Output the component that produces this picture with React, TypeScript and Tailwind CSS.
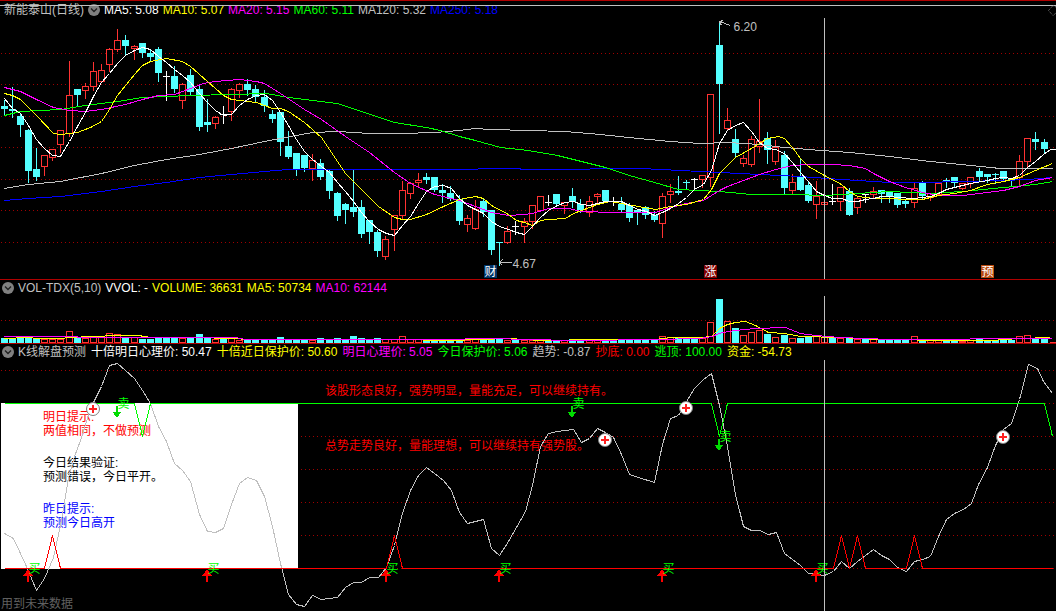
import React, { useState } from 'react';
import clsx from 'clsx';

type Point = [number, number];
// r = rising (hollow), c = falling (solid), w = unchanged
type Candle = ['r' | 'c' | 'w', number, number, number, number];

// kind, high, body top, body bottom, low
const candles: Candle[] = [
  ['c', 99, 106, 109, 115], ['c', 86, 109, 111, 117], ['c', 112, 116, 125, 136], ['c', 128, 130, 171, 182],
  ['c', 147, 169, 177, 180], ['r', 155, 155, 166, 175], ['r', 148, 149, 157, 160], ['r', 130, 130, 144, 152],
  ['r', 60, 95, 133, 136], ['c', 89, 89, 95, 105], ['r', 82, 86, 90, 98], ['r', 61, 71, 86, 90],
  ['r', 63, 70, 81, 82], ['r', 47, 49, 64, 71], ['r', 28, 40, 49, 51], ['c', 34, 40, 46, 55],
  ['r', 44, 46, 48, 59], ['c', 43, 43, 53, 57], ['c', 49, 53, 57, 60], ['c', 46, 49, 73, 81],
  ['w', 70, 76, 76, 100], ['c', 65, 76, 89, 92], ['r', 82, 84, 100, 108], ['c', 68, 75, 92, 95],
  ['c', 85, 89, 127, 130], ['c', 98, 122, 125, 131], ['r', 115, 117, 123, 128], ['w', 105, 114, 114, 123],
  ['r', 87, 89, 111, 120], ['r', 82, 84, 90, 97], ['c', 78, 84, 90, 95], ['c', 84, 89, 97, 101],
  ['c', 89, 97, 106, 111], ['c', 109, 114, 119, 122], ['c', 111, 112, 142, 155], ['c', 130, 146, 157, 158],
  ['c', 153, 153, 169, 175], ['c', 155, 155, 168, 171], ['r', 153, 160, 168, 180], ['c', 158, 163, 177, 179],
  ['c', 169, 171, 191, 198], ['c', 191, 193, 216, 220], ['c', 202, 204, 210, 223], ['c', 169, 207, 212, 216],
  ['c', 199, 207, 234, 237], ['c', 220, 220, 232, 243], ['c', 229, 232, 251, 256], ['r', 235, 239, 256, 259],
  ['r', 215, 215, 229, 250], ['r', 180, 190, 215, 218], ['r', 181, 183, 193, 198], ['r', 172, 180, 182, 187],
  ['c', 172, 177, 180, 183], ['c', 177, 177, 190, 191], ['c', 183, 190, 193, 202], ['c', 185, 193, 199, 200],
  ['c', 194, 199, 221, 224], ['r', 214, 218, 224, 231], ['r', 199, 209, 228, 229], ['c', 198, 201, 212, 216],
  ['c', 210, 210, 250, 254], ['c', 242, 242, 243, 265], ['r', 225, 231, 242, 243], ['w', 220, 226, 226, 234],
  ['r', 217, 221, 226, 242], ['r', 205, 205, 221, 228], ['r', 196, 196, 210, 211], ['w', 194, 202, 202, 205],
  ['c', 194, 194, 204, 206], ['r', 202, 202, 205, 213], ['c', 187, 196, 202, 207], ['c', 198, 204, 210, 212],
  ['r', 195, 201, 212, 216], ['r', 192, 194, 196, 202], ['c', 190, 190, 201, 202], ['w', 196, 201, 201, 205],
  ['c', 196, 204, 210, 212], ['c', 202, 205, 218, 221], ['c', 209, 210, 213, 224], ['c', 205, 207, 215, 218],
  ['c', 210, 215, 220, 221], ['r', 192, 196, 223, 237], ['r', 183, 191, 194, 202], ['c', 175, 191, 193, 194],
  ['c', 179, 182, 183, 189], ['w', 177, 179, 179, 188], ['r', 175, 175, 179, 187], ['r', 94, 94, 177, 186],
  ['c', 21, 45, 84, 133], ['r', 107, 120, 128, 130], ['c', 128, 139, 153, 157], ['r', 154, 158, 163, 166],
  ['r', 135, 139, 164, 166], ['r', 98, 141, 146, 152], ['c', 131, 138, 150, 163], ['r', 139, 147, 161, 164],
  ['c', 150, 155, 188, 194], ['r', 173, 182, 190, 193], ['c', 157, 177, 190, 190], ['c', 180, 185, 201, 202],
  ['r', 180, 196, 204, 218], ['r', 190, 202, 204, 213], ['w', 183, 201, 201, 204], ['r', 187, 187, 201, 210],
  ['c', 187, 191, 215, 215], ['r', 195, 198, 207, 213], ['w', 193, 194, 194, 202], ['r', 186, 191, 194, 197],
  ['c', 190, 190, 194, 202], ['c', 191, 191, 196, 202], ['c', 193, 193, 205, 207], ['c', 198, 201, 204, 207],
  ['r', 181, 188, 202, 207], ['c', 180, 182, 196, 198], ['r', 192, 193, 197, 200], ['r', 183, 183, 194, 195],
  ['c', 177, 180, 181, 187], ['c', 177, 177, 183, 187], ['r', 183, 183, 188, 189], ['r', 176, 177, 183, 187],
  ['c', 167, 171, 177, 180], ['c', 174, 174, 177, 182], ['c', 172, 174, 175, 183], ['c', 171, 171, 179, 180],
  ['c', 177, 179, 181, 185], ['r', 154, 161, 177, 184], ['r', 138, 138, 161, 166], ['c', 131, 139, 142, 149],
  ['c', 138, 142, 149, 153],
];

// Top edge of every volume bar, one for each candle
const volumeTops = [
  338, 338, 338, 337, 338, 339, 339, 339, 331, 338, 338, 337, 337, 333, 334, 337, 337, 339, 339, 337,
  337, 338, 338, 338, 334, 338, 339, 339, 338, 340, 339, 339, 339, 339, 337, 340, 340, 340, 340, 338,
  340, 338, 339, 336, 338, 339, 338, 339, 339, 336, 339, 339, 340, 340, 340, 339, 340, 340, 338, 340,
  338, 338, 340, 340, 340, 340, 340, 340, 340, 340, 339, 339, 340, 339, 340, 340, 339, 340, 340, 339,
  340, 336, 337, 337, 338, 339, 338, 322, 299, 321, 328, 335, 332, 330, 334, 337, 335, 338, 338, 337,
  336, 337, 337, 338, 337, 339, 339, 339, 340, 340, 340, 340, 336, 340, 340, 340, 340, 340, 341, 340,
  338, 340, 340, 340, 340, 336, 335, 339, 339,
];

const ma5: Point[] = [
  [4, 98], [12, 108], [20, 113], [28, 125], [36, 139], [44, 148], [52, 155], [60, 156], [69, 141], [77, 126],
  [85, 112], [93, 96], [101, 82], [109, 73], [117, 63], [125, 55], [134, 50], [142, 47], [150, 49], [158, 56],
  [166, 62], [174, 69], [182, 75], [190, 82], [199, 93], [207, 102], [215, 110], [223, 115], [231, 114],
  [239, 105], [247, 99], [256, 95], [264, 94], [272, 100], [280, 112], [288, 125], [296, 139], [304, 151],
  [312, 159], [321, 166], [329, 172], [337, 182], [345, 191], [353, 201], [361, 212], [369, 221], [378, 229],
  [386, 233], [394, 235], [402, 225], [410, 216], [418, 203], [426, 191], [434, 186], [443, 185], [451, 188],
  [459, 198], [467, 205], [475, 209], [483, 213], [491, 221], [499, 226], [508, 229], [516, 232], [524, 234],
  [532, 226], [540, 217], [548, 210], [557, 205], [565, 202], [573, 201], [581, 204], [589, 205], [597, 203],
  [605, 201], [621, 201], [629, 205], [638, 209], [646, 211], [654, 215], [662, 212], [670, 208], [678, 203],
  [686, 197], [694, 189], [703, 184], [711, 170], [719, 143], [727, 130], [735, 125], [743, 122], [751, 131],
  [759, 142], [767, 148], [775, 149], [784, 153], [792, 162], [800, 172], [808, 181], [816, 191], [824, 195],
  [832, 198], [841, 198], [849, 201], [857, 201], [865, 199], [873, 198], [881, 196], [889, 196], [897, 197],
  [913, 198], [922, 197], [930, 196], [938, 193], [946, 189], [954, 187], [970, 183], [987, 180], [995, 178],
  [1003, 177], [1011, 178], [1019, 175], [1027, 167], [1035, 161], [1043, 154], [1050, 149], [1055, 149],
];

const ma10: Point[] = [
  [4, 93], [12, 95], [20, 99], [36, 115], [53, 133], [60, 134], [77, 132], [90, 127], [101, 121], [109, 109],
  [117, 95], [134, 74], [142, 65], [150, 61], [166, 58], [182, 61], [190, 66], [207, 81], [223, 95], [231, 99],
  [256, 102], [264, 105], [272, 108], [280, 108], [288, 111], [304, 122], [321, 137], [329, 149], [345, 173],
  [361, 189], [378, 206], [394, 217], [402, 219], [410, 219], [426, 214], [443, 206], [459, 199], [475, 196],
  [483, 198], [491, 205], [508, 214], [516, 220], [524, 222], [532, 225], [540, 220], [548, 219], [565, 218],
  [573, 213], [589, 207], [597, 204], [609, 201], [621, 203], [638, 206], [655, 209], [670, 206], [686, 204],
  [703, 199], [711, 189], [719, 173], [735, 157], [751, 148], [767, 138], [778, 136], [784, 138], [792, 147],
  [800, 158], [808, 166], [824, 175], [841, 184], [849, 191], [857, 196], [873, 198], [922, 199], [938, 195],
  [954, 193], [970, 190], [987, 184], [1003, 181], [1019, 177], [1035, 170], [1052, 163],
];

const ma20: Point[] = [
  [4, 87], [20, 91], [36, 99], [53, 107], [69, 110], [85, 111], [101, 109], [125, 104], [142, 99], [158, 95],
  [174, 94], [190, 88], [203, 83], [215, 81], [239, 79], [256, 81], [264, 83], [280, 93], [304, 109], [321, 119],
  [345, 136], [369, 152], [394, 172], [410, 183], [434, 194], [459, 200], [475, 206], [491, 212], [508, 215],
  [524, 214], [532, 213], [548, 208], [568, 208], [581, 211], [613, 212], [655, 212], [670, 207], [686, 203],
  [703, 200], [719, 190], [727, 186], [743, 180], [759, 174], [775, 169], [792, 165], [808, 164], [832, 164],
  [849, 165], [865, 168], [873, 173], [889, 181], [905, 187], [922, 192], [938, 195], [962, 195], [987, 192],
  [1003, 190], [1019, 186], [1035, 180], [1052, 177],
];

const ma60: Point[] = [
  [4, 115], [20, 111], [60, 109], [85, 105], [117, 101], [142, 97], [190, 95], [231, 94], [266, 93], [288, 97],
  [312, 100], [337, 103], [361, 111], [394, 122], [426, 127], [440, 130], [459, 136], [475, 140], [500, 147],
  [528, 150], [557, 155], [581, 161], [605, 167], [629, 175], [654, 182], [678, 189], [719, 191], [751, 194],
  [792, 194], [824, 195], [857, 193], [889, 191], [930, 193], [962, 191], [1003, 187], [1035, 184], [1052, 181],
];

const ma120: Point[] = [
  [4, 188], [28, 184], [60, 181], [101, 173], [134, 165], [166, 159], [199, 154], [231, 148], [264, 141],
  [290, 136], [312, 132], [337, 131], [369, 133], [402, 133], [434, 132], [459, 130], [475, 128], [490, 129],
  [528, 130], [565, 131], [600, 134], [638, 138], [670, 141], [700, 143], [727, 142], [759, 144], [784, 147],
  [808, 149], [849, 152], [889, 156], [930, 161], [970, 165], [1000, 168], [1052, 168],
];

const ma250: Point[] = [
  [4, 200], [28, 198], [60, 196], [101, 191], [134, 186], [166, 182], [199, 177], [231, 174], [264, 171],
  [288, 169], [455, 169], [500, 168], [540, 169], [640, 168], [680, 170], [719, 172], [759, 174], [800, 176],
  [841, 179], [889, 182], [922, 182], [962, 181], [1003, 180], [1027, 179], [1052, 177],
];

const volMa5: Point[] = [
  [4, 338], [28, 337], [36, 338], [60, 338], [69, 337], [93, 336], [117, 335], [138, 335], [150, 337], [190, 337],
  [235, 338], [245, 339], [394, 339], [450, 340], [508, 338], [540, 340], [600, 339], [655, 339], [670, 337],
  [700, 337], [711, 336], [719, 328], [727, 324], [735, 322], [745, 321], [755, 325], [768, 332], [784, 333],
  [800, 336], [840, 337], [857, 338], [880, 339], [950, 340], [990, 340], [1019, 338], [1050, 337],
];

const volMa10: Point[] = [
  [4, 336], [150, 337], [235, 337], [245, 339], [430, 339], [500, 338], [520, 339], [580, 340], [655, 339],
  [700, 338], [711, 336], [722, 332], [735, 330], [755, 328], [785, 327], [800, 333], [815, 335], [840, 337],
  [890, 339], [1052, 338],
];

const trend: Point[] = [
  [4, 533], [13, 538], [20, 553], [26, 566], [36, 590], [44, 578], [53, 557], [60, 525], [65, 496], [68, 477],
  [74, 456], [80, 440], [88, 415], [93, 402], [101, 386], [109, 365], [117, 363], [125, 370], [134, 378],
  [142, 390], [150, 403], [158, 426], [166, 441], [174, 463], [182, 470], [190, 481], [199, 514], [207, 531],
  [215, 532], [223, 528], [231, 504], [239, 483], [247, 477], [256, 480], [264, 496], [272, 526], [280, 563],
  [288, 594], [296, 604], [304, 606], [312, 595], [321, 599], [337, 597], [345, 587], [353, 582], [361, 582],
  [369, 577], [378, 577], [386, 567], [394, 545], [402, 513], [410, 490], [418, 475], [426, 467], [434, 473],
  [443, 480], [451, 490], [459, 512], [467, 523], [483, 519], [491, 548], [499, 555], [508, 541], [525, 511],
  [532, 485], [540, 446], [548, 433], [557, 431], [573, 429], [581, 442], [589, 438], [597, 428], [605, 432],
  [613, 437], [621, 454], [629, 474], [638, 477], [654, 482], [662, 444], [670, 418], [678, 415], [686, 401],
  [694, 388], [703, 379], [711, 373], [719, 405], [727, 446], [735, 494], [743, 526], [751, 530], [759, 530],
  [768, 534], [776, 532], [784, 553], [800, 565], [808, 573], [816, 574], [824, 575], [833, 571], [841, 561],
  [849, 568], [857, 561], [873, 549], [881, 555], [889, 559], [897, 567], [906, 571], [914, 561], [922, 559],
  [930, 556], [938, 536], [946, 519], [954, 513], [963, 509], [971, 503], [978, 484], [987, 467], [995, 445],
  [1003, 429], [1011, 423], [1019, 399], [1028, 364], [1037, 368], [1043, 381], [1052, 393],
];

const escapeLine: Point[] = [
  [4, 403], [134, 403], [142, 436], [150, 403], [711, 403], [719, 436], [727, 403], [1044, 403], [1052, 436],
];

const bottomLine: Point[] = [
  [4, 568], [44, 568], [52, 535], [60, 568], [386, 568], [394, 535], [402, 568], [833, 568], [841, 535],
  [849, 568], [857, 535], [865, 568], [906, 568], [914, 535], [922, 568], [1052, 568],
];

const buyMarks = [28, 207, 386, 499, 662, 816];
const sellMarks: Point[] = [[117, 405], [572, 405], [719, 438]];
const crossMarks: Point[] = [[93, 409], [605, 440], [686, 408], [1003, 437]];

const candleX = (i: number) => 4 + Math.floor(i * 8.125);

const toneClass = {
  white: 'text-white',
  yellow: 'text-[#ffff00]',
  magenta: 'text-[#ff00ff]',
  green: 'text-[#00ff00]',
  gray: 'text-[#c0c0c0]',
  blue: 'text-[#0000ff]',
  red: 'text-[#ff0000]',
};

type Reading = [string, keyof typeof toneClass];

const priceReadings: Reading[] = [
  ['MA5: 5.08', 'white'],
  ['MA10: 5.07', 'yellow'],
  ['MA20: 5.15', 'magenta'],
  ['MA60: 5.11', 'green'],
  ['MA120: 5.32', 'gray'],
  ['MA250: 5.18', 'blue'],
];

const volumeReadings: Reading[] = [
  ['VVOL: -', 'white'],
  ['VOLUME: 36631', 'yellow'],
  ['MA5: 50734', 'yellow'],
  ['MA10: 62144', 'magenta'],
];

const forecastReadings: Reading[] = [
  ['十倍明日心理价: 50.47', 'white'],
  ['十倍近日保护价: 50.60', 'yellow'],
  ['明日心理价: 5.05', 'magenta'],
  ['今日保护价: 5.06', 'green'],
  ['趋势: -0.87', 'gray'],
  ['抄底: 0.00', 'red'],
  ['逃顶: 100.00', 'green'],
  ['资金: -54.73', 'yellow'],
];

function Readings({ items }: { items: Reading[] }) {
  return (
    <>
      {items.map(([text, tone]) => (
        <span key={text} className={toneClass[tone]}>{text}</span>
      ))}
    </>
  );
}

function ToggleButton({ label, open, onClick }: { label: string; open: boolean; onClick: () => void }) {
  return (
    <button type="button" aria-label={label} aria-expanded={open} onClick={onClick} className="shrink-0">
      <svg width="12" height="12" viewBox="0 0 12 12" className="block">
        <circle cx="6" cy="6" r="6" fill="#808080" />
        <path d="M3 4.5 L6 7.5 L9 4.5" fill="none" stroke="#202020" strokeWidth="1.4" />
      </svg>
    </button>
  );
}

function Line({ points, color }: { points: Point[]; color: string }) {
  return <polyline points={points.map((p) => p.join(',')).join(' ')} fill="none" stroke={color} />;
}

function Grid({ rows }: { rows: number[] }) {
  return (
    <>
      {rows.map((y) => (
        <line key={y} x1="0.5" x2="100%" y1={y} y2={y} stroke="#a00000" strokeDasharray="1 3" />
      ))}
    </>
  );
}

// Charts share one vertical scale; top is where the plot area begins on it
function Plot({ top, label, className, children }: {
  top: number;
  label: string;
  className: string;
  children: React.ReactNode;
}) {
  return (
    <svg role="img" aria-label={label} className={clsx('block w-full', className)}>
      <g transform={`translate(0.5 ${0.5 - top})`} shapeRendering="crispEdges">
        {children}
      </g>
    </svg>
  );
}

function CandleShape({ candle, x }: { candle: Candle; x: number }) {
  const [kind, high, top, bottom, low] = candle;
  if (kind === 'r') {
    return (
      <g stroke="#ff3232" fill="#000000">
        {high < top && <line x1={x} x2={x} y1={high} y2={top} />}
        {low > bottom && <line x1={x} x2={x} y1={bottom} y2={low} />}
        <rect x={x - 3} y={top} width="6" height={bottom - top} />
      </g>
    );
  }
  const color = kind === 'c' ? '#54ffff' : '#ffffff';
  return (
    <g>
      <line x1={x} x2={x} y1={high} y2={low} stroke={color} />
      <rect x={x - 3.5} y={top - 0.5} width="7" height={Math.max(bottom - top, 1)} fill={color} />
    </g>
  );
}

function EventBadge({ x, text, color }: { x: number; text: string; color: string }) {
  return (
    <g>
      <rect x={x - 0.5} y="264.5" width="13" height="13" fill={color} />
      <text x={x} y="275" fill="#ffffff">{text}</text>
    </g>
  );
}

export default function App() {
  const [open, setOpen] = useState([true, true, true]);
  const toggle = (index: number) => setOpen(open.map((value, i) => (i === index ? !value : value)));

  return (
    <main className="min-h-screen overflow-hidden bg-black text-[12px] leading-[14px] text-[#c0c0c0] [font-family:'Liberation_Sans','Noto_Sans_CJK_SC',sans-serif]">
      {/* Price */}
      <section className="border-t border-[#b00000]">
        <header className="relative flex h-4 items-center gap-1 overflow-hidden whitespace-nowrap pt-0.5 pl-1">
          <h1>新能泰山(日线)</h1>
          <ToggleButton label="日线" open={open[0]} onClick={() => toggle(0)} />
          <Readings items={priceReadings} />
          <div className="absolute inset-x-0 top-1 h-px bg-[#c0c0c0]" />
          <svg width="8" height="12" className="absolute top-1 right-0">
            <path d="M8 2 L5 0.5 L0.5 5.5 L5 10.5 L8 8" fill="none" stroke="#808080" strokeDasharray="1 1" />
          </svg>
        </header>
        {open[0] && (
          <Plot top={17} label="日线" className="h-[262px]">
            <Grid rows={[53, 84, 116, 147, 179, 210, 242]} />
            {candles.map((candle, i) => (
              <CandleShape key={i} candle={candle} x={candleX(i)} />
            ))}
            <Line points={ma250} color="#0000ff" />
            <Line points={ma120} color="#c0c0c0" />
            <Line points={ma60} color="#00ff00" />
            <Line points={ma20} color="#ff00ff" />
            <Line points={ma10} color="#ffff00" />
            <Line points={ma5} color="#ffffff" />
            <path d="M730 25 L719 21 M723 20 L719 21 L721 25" fill="none" stroke="#c0c0c0" />
            <text x="733" y="30" fill="#c0c0c0">6.20</text>
            <path d="M511 262 H499 M502 259 L499 262 L502 265" fill="none" stroke="#c0c0c0" />
            <text x="512" y="267" fill="#c0c0c0">4.67</text>
            <EventBadge x={484} text="财" color="#003366" />
            <EventBadge x={704} text="涨" color="#800000" />
            <EventBadge x={981} text="预" color="#b84a10" />
            <line x1="824" x2="824" y1="17" y2="279" stroke="#c0c0c0" />
          </Plot>
        )}
      </section>

      {/* Volume */}
      <section className="border-t border-[#b00000]">
        <header className="flex h-[15px] items-center gap-1 overflow-hidden whitespace-nowrap pl-0.5">
          <ToggleButton label="VOL-TDX" open={open[1]} onClick={() => toggle(1)} />
          <h2>VOL-TDX(5,10)</h2>
          <Readings items={volumeReadings} />
        </header>
        {open[1] && (
          <Plot top={295} label="VOL-TDX" className="h-12">
            <Grid rows={[320]} />
            {volumeTops.map((top, i) =>
              candles[i][0] === 'r' ? (
                <rect key={i} x={candleX(i) - 3} y={top} width="6" height={342 - top} fill="#000000" stroke="#ff3232" />
              ) : (
                <rect key={i} x={candleX(i) - 3.5} y={top - 0.5} width="7" height={343 - top} fill="#54ffff" />
              ),
            )}
            <line x1="1049" x2="1056" y1="342" y2="342" stroke="#ff3232" />
            <Line points={volMa5} color="#ffff00" />
            <Line points={volMa10} color="#ff00ff" />
            <line x1="824" x2="824" y1="295" y2="343" stroke="#c0c0c0" />
          </Plot>
        )}
      </section>

      {/* Forecast */}
      <section className="border-t border-[#b00000]">
        <header className="flex h-[15px] items-center overflow-hidden whitespace-nowrap pl-0.5">
          <ToggleButton label="K线解盘预测" open={open[2]} onClick={() => toggle(2)} />
          <div className="flex gap-[5px] pl-1">
            <h2>K线解盘预测</h2>
            <Readings items={forecastReadings} />
          </div>
        </header>
        {open[2] && (
          <div className="relative">
            <Plot top={359} label="K线解盘预测" className="h-[252px]">
              <Grid rows={[370, 403, 436, 469, 502, 535, 568]} />
              <rect x="0.5" y="402.5" width="297" height="166" fill="#ffffff" />
            </Plot>

            <div className="absolute top-[51px] left-[43px] flex flex-col gap-[18px]">
              <p className="text-[#ff0000]">明日提示:<br />两值相同，不做预测</p>
              <p className="text-black">今日结果验证:<br />预测错误，今日平开。</p>
              <p className="text-[#0000ff]">昨日提示:<br />预测今日高开</p>
            </div>
            <div className="absolute top-[25px] left-[325px] flex flex-col gap-[41px] text-[#ff0000]">
              <p>该股形态良好，强势明显，量能充足，可以继续持有。</p>
              <p>总势走势良好，量能理想，可以继续持有强势股。</p>
            </div>
            <p className="absolute bottom-0 left-px text-[#606060]">用到未来数据</p>

            <div className="pointer-events-none absolute inset-0">
              <Plot top={359} label="买卖信号" className="h-[252px]">
                <Line points={trend} color="#c0c0c0" />
                <Line points={escapeLine} color="#00ff00" />
                <Line points={bottomLine} color="#ff0000" />
                {buyMarks.map((x) => (
                  <g key={x}>
                    <path d={`M${x - 0.5} 569 L${x + 4.5} 575.5 H${x + 0.5} V581.5 H${x - 1.5} V575.5 H${x - 5.5} Z`} fill="#ff0000" />
                    <text x={x} y="572" fill="#00ff00">买</text>
                  </g>
                ))}
                {sellMarks.map(([x, y]) => (
                  <g key={x}>
                    <path d={`M${x - 1.5} ${y} H${x + 0.5} V${y + 6} H${x + 4.5} L${x - 0.5} ${y + 12} L${x - 5.5} ${y + 6} H${x - 1.5} Z`} fill="#00dc00" />
                    <text x={x} y={y + 2} fill="#00ff00">卖</text>
                  </g>
                ))}
                {crossMarks.map(([x, y]) => (
                  <g key={x} shapeRendering="auto">
                    <circle cx={x - 0.5} cy={y - 0.5} r="6.5" fill="#ffffff" stroke="#808080" />
                    <path d={`M${x - 4.5} ${y - 0.5} H${x + 3.5} M${x - 0.5} ${y - 4.5} V${y + 3.5}`} stroke="#ff2020" strokeWidth="2" />
                  </g>
                ))}
                <line x1="824" x2="824" y1="359" y2="611" stroke="#c0c0c0" />
              </Plot>
            </div>
          </div>
        )}
      </section>
    </main>
  );
}
